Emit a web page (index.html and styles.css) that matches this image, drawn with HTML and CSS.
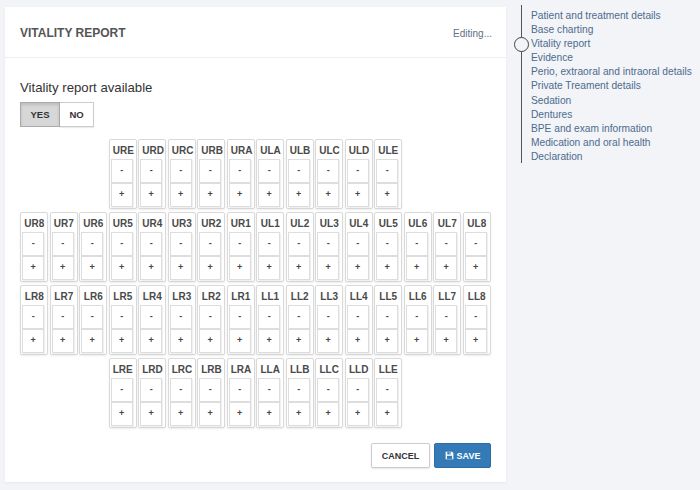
FILE: index.html
```html
<!DOCTYPE html>
<html>
<head>
<meta charset="utf-8">
<link rel="stylesheet" href="styles.css">
</head>
<body>
<div class="page">
  <div class="card">
    <div class="card-head">
      <div class="title">VITALITY REPORT</div>
      <div class="status">Editing...</div>
    </div>
    <div class="card-body">
      <div class="question">Vitality report available</div>
      <div class="toggle">
        <button class="tbtn active">YES</button>
        <button class="tbtn">NO</button>
      </div>
      <div class="chart">
        <div class="row">
          <div class="tooth"><div class="lbl">URE</div><div class="cell">-</div><div class="cell">+</div></div>
          <div class="tooth"><div class="lbl">URD</div><div class="cell">-</div><div class="cell">+</div></div>
          <div class="tooth"><div class="lbl">URC</div><div class="cell">-</div><div class="cell">+</div></div>
          <div class="tooth"><div class="lbl">URB</div><div class="cell">-</div><div class="cell">+</div></div>
          <div class="tooth"><div class="lbl">URA</div><div class="cell">-</div><div class="cell">+</div></div>
          <div class="tooth"><div class="lbl">ULA</div><div class="cell">-</div><div class="cell">+</div></div>
          <div class="tooth"><div class="lbl">ULB</div><div class="cell">-</div><div class="cell">+</div></div>
          <div class="tooth"><div class="lbl">ULC</div><div class="cell">-</div><div class="cell">+</div></div>
          <div class="tooth"><div class="lbl">ULD</div><div class="cell">-</div><div class="cell">+</div></div>
          <div class="tooth"><div class="lbl">ULE</div><div class="cell">-</div><div class="cell">+</div></div>
        </div>
        <div class="row">
          <div class="tooth"><div class="lbl">UR8</div><div class="cell">-</div><div class="cell">+</div></div>
          <div class="tooth"><div class="lbl">UR7</div><div class="cell">-</div><div class="cell">+</div></div>
          <div class="tooth"><div class="lbl">UR6</div><div class="cell">-</div><div class="cell">+</div></div>
          <div class="tooth"><div class="lbl">UR5</div><div class="cell">-</div><div class="cell">+</div></div>
          <div class="tooth"><div class="lbl">UR4</div><div class="cell">-</div><div class="cell">+</div></div>
          <div class="tooth"><div class="lbl">UR3</div><div class="cell">-</div><div class="cell">+</div></div>
          <div class="tooth"><div class="lbl">UR2</div><div class="cell">-</div><div class="cell">+</div></div>
          <div class="tooth"><div class="lbl">UR1</div><div class="cell">-</div><div class="cell">+</div></div>
          <div class="tooth"><div class="lbl">UL1</div><div class="cell">-</div><div class="cell">+</div></div>
          <div class="tooth"><div class="lbl">UL2</div><div class="cell">-</div><div class="cell">+</div></div>
          <div class="tooth"><div class="lbl">UL3</div><div class="cell">-</div><div class="cell">+</div></div>
          <div class="tooth"><div class="lbl">UL4</div><div class="cell">-</div><div class="cell">+</div></div>
          <div class="tooth"><div class="lbl">UL5</div><div class="cell">-</div><div class="cell">+</div></div>
          <div class="tooth"><div class="lbl">UL6</div><div class="cell">-</div><div class="cell">+</div></div>
          <div class="tooth"><div class="lbl">UL7</div><div class="cell">-</div><div class="cell">+</div></div>
          <div class="tooth"><div class="lbl">UL8</div><div class="cell">-</div><div class="cell">+</div></div>
        </div>
        <div class="row">
          <div class="tooth"><div class="lbl">LR8</div><div class="cell">-</div><div class="cell">+</div></div>
          <div class="tooth"><div class="lbl">LR7</div><div class="cell">-</div><div class="cell">+</div></div>
          <div class="tooth"><div class="lbl">LR6</div><div class="cell">-</div><div class="cell">+</div></div>
          <div class="tooth"><div class="lbl">LR5</div><div class="cell">-</div><div class="cell">+</div></div>
          <div class="tooth"><div class="lbl">LR4</div><div class="cell">-</div><div class="cell">+</div></div>
          <div class="tooth"><div class="lbl">LR3</div><div class="cell">-</div><div class="cell">+</div></div>
          <div class="tooth"><div class="lbl">LR2</div><div class="cell">-</div><div class="cell">+</div></div>
          <div class="tooth"><div class="lbl">LR1</div><div class="cell">-</div><div class="cell">+</div></div>
          <div class="tooth"><div class="lbl">LL1</div><div class="cell">-</div><div class="cell">+</div></div>
          <div class="tooth"><div class="lbl">LL2</div><div class="cell">-</div><div class="cell">+</div></div>
          <div class="tooth"><div class="lbl">LL3</div><div class="cell">-</div><div class="cell">+</div></div>
          <div class="tooth"><div class="lbl">LL4</div><div class="cell">-</div><div class="cell">+</div></div>
          <div class="tooth"><div class="lbl">LL5</div><div class="cell">-</div><div class="cell">+</div></div>
          <div class="tooth"><div class="lbl">LL6</div><div class="cell">-</div><div class="cell">+</div></div>
          <div class="tooth"><div class="lbl">LL7</div><div class="cell">-</div><div class="cell">+</div></div>
          <div class="tooth"><div class="lbl">LL8</div><div class="cell">-</div><div class="cell">+</div></div>
        </div>
        <div class="row">
          <div class="tooth"><div class="lbl">LRE</div><div class="cell">-</div><div class="cell">+</div></div>
          <div class="tooth"><div class="lbl">LRD</div><div class="cell">-</div><div class="cell">+</div></div>
          <div class="tooth"><div class="lbl">LRC</div><div class="cell">-</div><div class="cell">+</div></div>
          <div class="tooth"><div class="lbl">LRB</div><div class="cell">-</div><div class="cell">+</div></div>
          <div class="tooth"><div class="lbl">LRA</div><div class="cell">-</div><div class="cell">+</div></div>
          <div class="tooth"><div class="lbl">LLA</div><div class="cell">-</div><div class="cell">+</div></div>
          <div class="tooth"><div class="lbl">LLB</div><div class="cell">-</div><div class="cell">+</div></div>
          <div class="tooth"><div class="lbl">LLC</div><div class="cell">-</div><div class="cell">+</div></div>
          <div class="tooth"><div class="lbl">LLD</div><div class="cell">-</div><div class="cell">+</div></div>
          <div class="tooth"><div class="lbl">LLE</div><div class="cell">-</div><div class="cell">+</div></div>
        </div>
      </div>
      <div class="actions">
        <button class="btn cancel">CANCEL</button>
        <button class="btn save"><svg class="ico" viewBox="0 0 14 14" width="9" height="9"><path d="M1 1h10l2 2v10H1z" fill="#fff"/><rect x="3.5" y="1.8" width="6" height="3.5" fill="#337ab7"/><rect x="7.2" y="2.3" width="1.4" height="2.5" fill="#fff"/><rect x="3" y="7.5" width="8" height="4.8" fill="#337ab7"/></svg>SAVE</button>
      </div>
    </div>
  </div>
  <nav class="steps">
    <div class="step">Patient and treatment details</div>
    <div class="step">Base charting</div>
    <div class="step current">Vitality report</div>
    <div class="step">Evidence</div>
    <div class="step">Perio, extraoral and intraoral details</div>
    <div class="step">Private Treament details</div>
    <div class="step">Sedation</div>
    <div class="step">Dentures</div>
    <div class="step">BPE and exam information</div>
    <div class="step">Medication and oral health</div>
    <div class="step">Declaration</div>
  </nav>
</div>
</body>
</html>
```
FILE: styles.css
```css
* { box-sizing: border-box; }
html, body { margin: 0; padding: 0; }
body {
  background: #f2f4f7;
  font-family: "Liberation Sans", Arial, sans-serif;
  width: 700px;
  height: 490px;
  overflow: hidden;
}
.page {
  display: flex;
  align-items: flex-start;
  padding: 7px 0 0 5px;
}
.card {
  width: 501px;
  height: 475px;
  background: #fff;
  box-shadow: 0 1px 2px rgba(0,0,0,0.06);
  display: flex;
  flex-direction: column;
}
.card-head {
  height: 52px;
  border-bottom: 1px solid #eceef2;
  display: flex;
  align-items: center;
  justify-content: space-between;
  padding: 0 14px 0 15px;
}
.title {
  font-size: 12px;
  font-weight: bold;
  color: #555;
  margin-top: 1px;
}
.status {
  font-size: 10px;
  color: #5f7184;
  margin-top: 3px;
}
.card-body {
  padding: 21px 15px 14px 15px;
  display: flex;
  flex-direction: column;
}
.question {
  font-size: 13.2px;
  color: #333;
  line-height: 17px;
}
.toggle {
  display: flex;
  margin-top: 6px;
}
.tbtn {
  height: 25px;
  border: 1px solid #ccc;
  background: #fff;
  font-family: "Liberation Sans", Arial, sans-serif;
  font-size: 9.5px;
  font-weight: bold;
  color: #333;
  padding: 0;
  box-shadow: 0 1px 1px rgba(0,0,0,0.08);
}
.tbtn.active {
  width: 40px;
  background: #d7d7d7;
  border-color: #aaa;
  box-shadow: inset 0 2px 3px rgba(0,0,0,0.12);
}
.tbtn + .tbtn {
  width: 34px;
  border-left: none;
}
.chart {
  margin-top: 12px;
  display: flex;
  flex-direction: column;
  gap: 3px;
}
.row {
  display: flex;
  justify-content: center;
  gap: 1.5px;
}
.tooth {
  width: 28px;
  height: 70px;
  border: 1px solid #d9d9d9;
  border-radius: 2px;
  background: #fff;
  box-shadow: 0 1px 2px rgba(0,0,0,0.08);
  padding: 0 3px 0 1px;
  display: flex;
  flex-direction: column;
  align-items: stretch;
}
.lbl {
  height: 19px;
  line-height: 21px;
  text-align: center;
  font-size: 10px;
  font-weight: bold;
  color: #4a4a4a;
  padding-left: 2px;
}
.cell {
  height: 24px;
  border: 1px solid #ddd;
  background: #fff;
  box-shadow: 1px 1px 1px rgba(0,0,0,0.06);
  text-align: center;
  line-height: 21px;
  font-size: 9px;
  font-weight: bold;
  color: #444;
}
.actions {
  margin-top: 15px;
  display: flex;
  justify-content: flex-end;
  gap: 4px;
}
.btn {
  height: 25px;
  font-family: "Liberation Sans", Arial, sans-serif;
  font-size: 9px;
  font-weight: bold;
  padding: 0;
  border-radius: 2px;
  display: flex;
  align-items: center;
  justify-content: center;
}
.cancel {
  width: 59px;
  background: #fff;
  color: #333;
  border: 1px solid #ccc;
  box-shadow: 0 1px 2px rgba(0,0,0,0.1);
}
.save {
  width: 57px;
  background: #337ab7;
  color: #fff;
  border: 1px solid #2e6da4;
}
.ico { margin-right: 3px; }
.steps {
  margin: -2px 0 0 15px;
  border-left: 1px solid #555;
  padding: 0 0 0 9px;
  height: 158px;
}
.step {
  font-family: "Liberation Sans Narrow", "Liberation Sans", Arial, sans-serif;
  font-size: 10.2px;
  line-height: 14.1px;
  color: #4d6b8e;
  white-space: nowrap;
  position: relative;
}
.step:first-child { margin-top: 4px; }
.current::before {
  content: "";
  position: absolute;
  left: -17px;
  top: 0px;
  width: 13px;
  height: 13px;
  border: 1px solid #444;
  border-radius: 50%;
  background: #f2f4f7;
}
```
